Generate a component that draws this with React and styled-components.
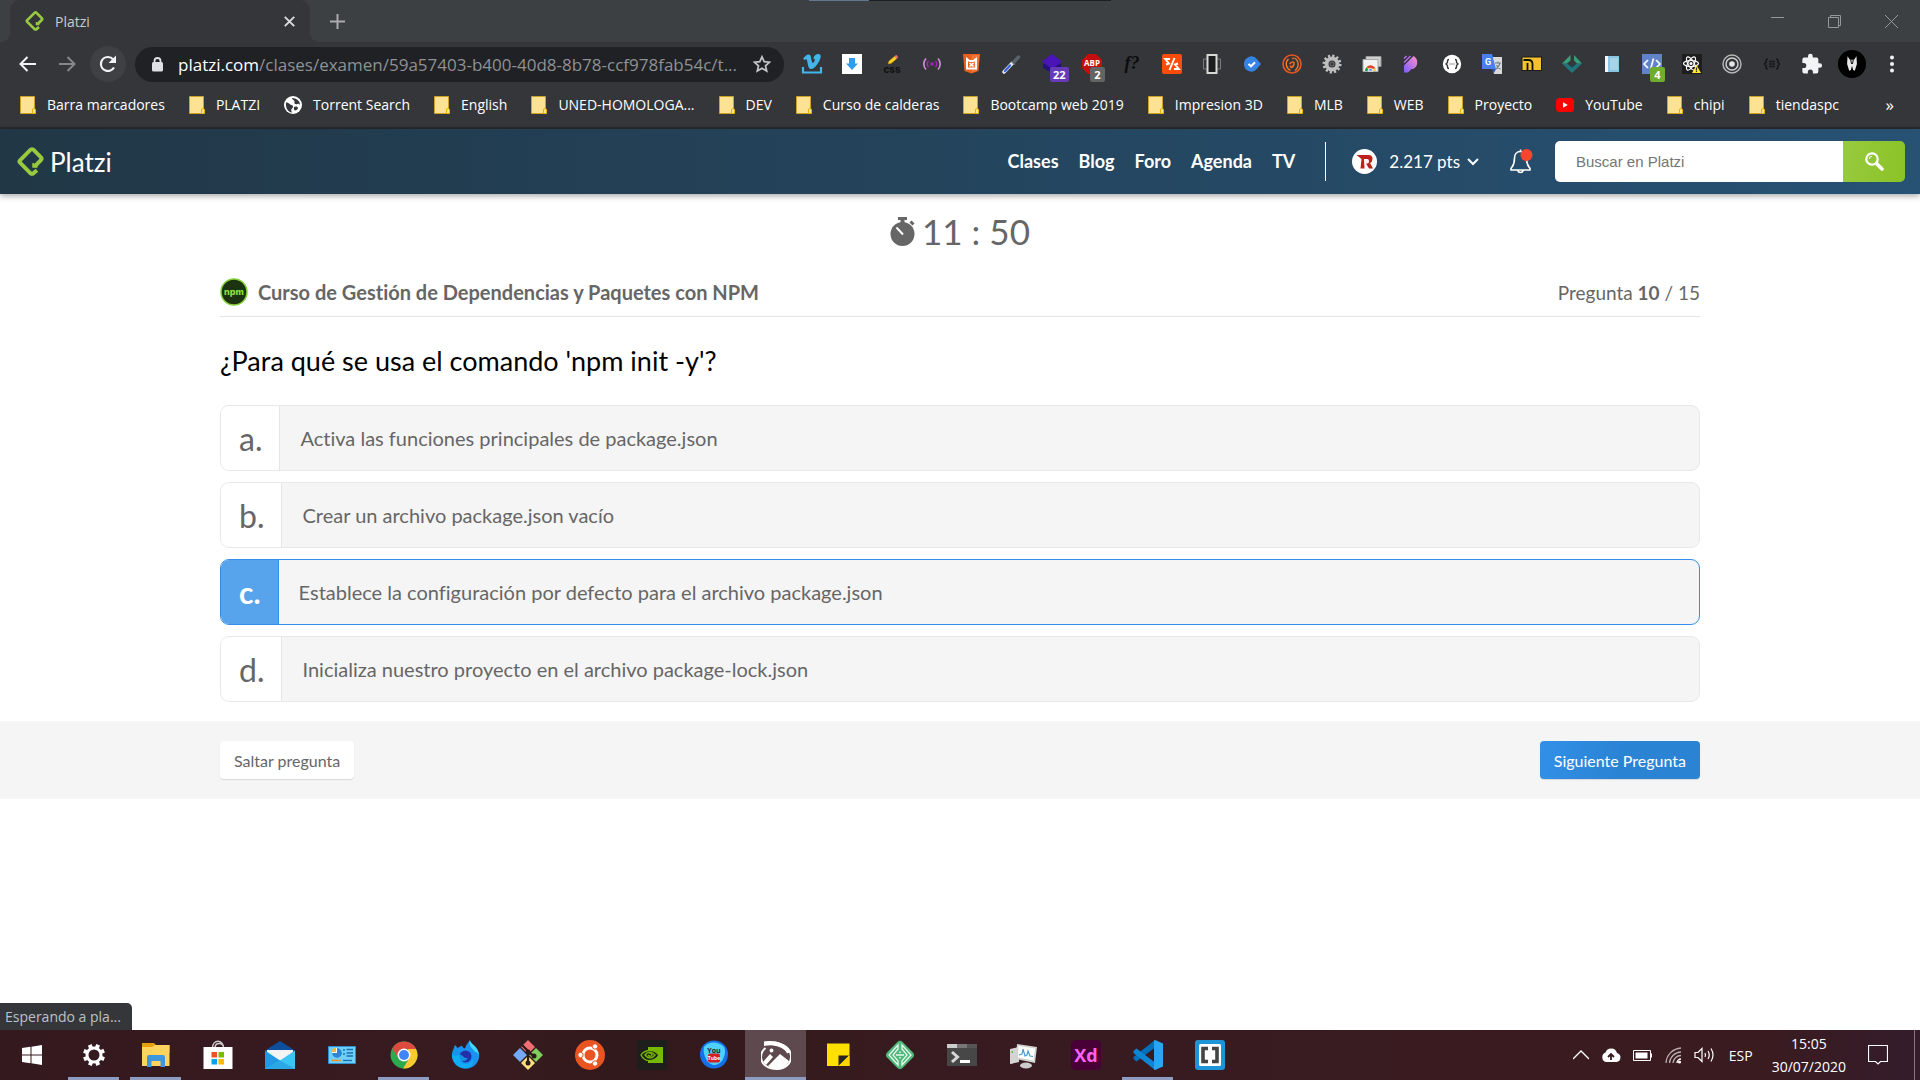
import React, { useState } from "react";
import styled, { createGlobalStyle, css } from "styled-components";

const uiFont = `"Open Sans", "Noto Sans", sans-serif`;
const siteFont = `Lato, "Open Sans", sans-serif`;

const GlobalStyle = createGlobalStyle`
  *, *::before, *::after { box-sizing: border-box; }
  body { margin: 0; background: #fff; font-family: ${siteFont}; font-variant-ligatures: none; }
  button { border: 0; padding: 0; margin: 0; background: none; font: inherit; color: inherit; cursor: pointer; }
  svg { display: block; flex: none; }
`;

const Screen = styled.div`
  min-height: 100vh;
  display: flex;
  flex-direction: column;
  overflow-x: hidden;
`;

/* ---------- Browser chrome ---------- */

const TabStrip = styled.div`
  position: relative;
  display: flex;
  align-items: stretch;
  height: 42px;
  padding-left: 10px;
  background: #3c4043;
  font-family: ${uiFont};
  &::before {
    content: "";
    position: absolute;
    top: 0;
    left: 809px;
    width: 302px;
    height: 1px;
    background: linear-gradient(90deg, #66758f 60px, #1e1f21 60px);
  }
`;

const Tab = styled.div`
  position: relative;
  display: flex;
  align-items: center;
  gap: 11px;
  width: 300px;
  padding: 0 13px 0 15px;
  background: #35363a;
  border-radius: 10px 10px 0 0;
  font-size: 14px;
  color: #c9cbcf;
  &::before,
  &::after {
    content: "";
    position: absolute;
    bottom: 0;
    width: 10px;
    height: 10px;
  }
  &::before {
    right: 100%;
    background: radial-gradient(circle at 0 0, transparent 10px, #35363a 10px);
  }
  &::after {
    left: 100%;
    background: radial-gradient(circle at 100% 0, transparent 10px, #35363a 10px);
  }
`;

const TabTitle = styled.span`
  flex: 1;
`;

const StripButton = styled.button`
  display: grid;
  place-items: center;
  width: ${(p) => p.$width}px;
  color: ${(p) => p.$color || "#dadce0"};
`;

const WindowControls = styled.div`
  display: flex;
  margin-left: auto;
`;

const Toolbar = styled.div`
  display: flex;
  align-items: center;
  height: 44px;
  padding: 0 8px 0 7px;
  background: #35363a;
`;

const ToolButton = styled.button`
  position: relative;
  display: grid;
  place-items: center;
  flex: none;
  width: 40px;
  height: 36px;
  color: ${(p) => (p.$muted ? "#85878a" : "#f1f3f4")};
`;

const Reload = styled(ToolButton)`
  width: 36px;
  margin: 0 9px 0 3px;
  border-radius: 50%;
  background: #3f4044;
`;

const Omnibox = styled.div`
  display: flex;
  align-items: center;
  flex: 1;
  height: 35px;
  min-width: 0;
  margin-right: 8px;
  padding: 0 13px 0 16px;
  border-radius: 18px;
  background: #202124;
  font-family: ${uiFont};
  font-size: 17px;
  color: #8f9194;
`;

const Address = styled.span`
  flex: 1;
  min-width: 0;
  margin-left: 14px;
  white-space: nowrap;
  b {
    font-weight: 400;
    color: #fff;
  }
`;

const Badge = styled.span`
  position: absolute;
  left: 18px;
  top: 21px;
  min-width: 15px;
  padding: 0 3px;
  border-radius: 2px;
  background: ${(p) => p.$color};
  color: #fff;
  font: 700 11px/15px ${uiFont};
`;

const BookmarkBar = styled.nav`
  display: flex;
  align-items: center;
  height: 43px;
  padding: 0 26px 4px 20px;
  background: #35363a;
  border-bottom: 2px solid #28292b;
  font-family: ${uiFont};
  font-size: 14px;
  color: #fff;
`;

const Bookmark = styled.a`
  display: flex;
  align-items: center;
  gap: 11px;
  margin-right: 24px;
  color: inherit;
  text-decoration: none;
  white-space: nowrap;
`;

const More = styled.button`
  margin-left: auto;
  font-size: 17px;
  line-height: 20px;
`;

/* ---------- Site header ---------- */

const SiteHeader = styled.header`
  position: relative;
  display: flex;
  align-items: center;
  height: 65px;
  padding: 0 15px 0 17px;
  background: linear-gradient(90deg, #213746, #275274);
  box-shadow: 0 2px 6px rgba(0, 0, 0, 0.35);
  color: #fff;
`;

const Brand = styled.a`
  display: flex;
  align-items: center;
  gap: 6px;
  margin-right: auto;
  color: #fff;
  font: 400 26px/30px ${siteFont};
  text-decoration: none;
`;

const Nav = styled.nav`
  display: flex;
  gap: 20px;
  padding-right: 30px;
  margin-right: 26px;
  border-right: 1px solid #fff;
  line-height: 39px;
  font-size: 18px;
  font-weight: 700;
  a {
    color: #fff;
    text-decoration: none;
  }
`;

const Points = styled.button`
  display: flex;
  align-items: center;
  font-size: 17px;
  svg + span {
    margin: 0 7px 0 12px;
  }
`;

const Bell = styled.button`
  margin: 0 22px 0 31px;
`;

const Search = styled.form`
  display: flex;
  width: 350px;
  height: 41px;
  border-radius: 5px;
  overflow: hidden;
  input {
    flex: 1;
    min-width: 0;
    padding: 0 21px;
    border: 0;
    background: #fff;
    font: 15px "Liberation Sans", sans-serif;
    &::placeholder {
      color: #757575;
    }
  }
  button {
    display: grid;
    place-items: center;
    width: 62px;
    background: linear-gradient(100deg, #98ca3f, #8ac326);
  }
`;

/* ---------- Exam ---------- */

const Page = styled.main`
  position: relative;
  flex: 1;
  color: #666;
`;

const Wrap = styled.div`
  max-width: 1520px;
  margin: 0 auto;
  padding: 0 20px;
`;

const Timer = styled.div`
  display: flex;
  align-items: center;
  justify-content: center;
  gap: 7px;
  height: 74px;
  font-size: 35px;
`;

const CourseRow = styled.div`
  display: flex;
  align-items: center;
  height: 49px;
  border-bottom: 1px solid #e5e5e5;
  font-size: 19px;
`;

const CourseTitle = styled.h1`
  flex: 1;
  margin: 0 0 0 10px;
  font-size: 20px;
`;

const Question = styled.legend`
  padding: 0;
  font-size: 27px;
  line-height: 88px;
  color: #000;
`;

const Options = styled.fieldset`
  margin: 0;
  padding: 0 0 19px;
  border: 0;
`;

const Letter = styled.span`
  display: flex;
  align-items: center;
  padding: 0 17px 0 18px;
  border-right: 1px solid #e5e5e5;
  background: #fff;
  font-size: 32px;
`;

const Option = styled.label`
  display: flex;
  height: 66px;
  margin-bottom: 11px;
  border: 1px solid #e8e8e8;
  border-radius: 9px;
  background: #f5f5f5;
  overflow: hidden;
  font-size: 20px;
  cursor: pointer;
  &:last-child {
    margin-bottom: 0;
  }
  input {
    position: absolute;
    opacity: 0;
  }
  ${(p) =>
    p.$selected &&
    css`
      border-color: #3190e7;
      ${Letter} {
        background: #58a4ec;
        border-color: #3190e7;
        color: #fff;
        font-weight: 700;
        font-size: 30px;
      }
    `}
`;

const OptionText = styled.span`
  align-self: center;
  padding: 0 20px;
`;

const Actions = styled.footer`
  background: #f5f5f5;
  padding: 20px 0;
`;

const ActionRow = styled(Wrap)`
  display: flex;
  justify-content: space-between;
`;

const Action = styled.button`
  height: 38px;
  padding: 2px 14px 0;
  border-radius: 4px;
  font-size: 16px;
  line-height: 36px;
  color: ${(p) => (p.$primary ? "#fff" : "#666")};
  background: ${(p) => (p.$primary ? "linear-gradient(100deg, #3190e7, #2b83d4 50%)" : "#fff")};
  box-shadow: 0 1px 1px rgba(0, 0, 0, 0.12);
`;

const Status = styled.div`
  position: absolute;
  left: 0;
  bottom: 0;
  width: 132px;
  padding-left: 5px;
  border-top-right-radius: 5px;
  background: #35363a;
  color: #bdc1c6;
  font: 14px/27px ${uiFont};
`;

/* ---------- Taskbar ---------- */

const Taskbar = styled.div`
  display: flex;
  align-items: stretch;
  height: 50px;
  padding-left: 1px;
  background: linear-gradient(90deg, #34191f, #371b20 25%, #32191b 32%, #371b20 50%, #3a1b20 92%, #341c2b);
  color: #fff;
  font-family: ${uiFont};
`;

const Task = styled.button`
  display: grid;
  place-items: center;
  width: 62px;
  border-right: 1px solid transparent;
  ${(p) =>
    p.$open &&
    css`
      background: linear-gradient(#8e9cc0, #8e9cc0) center bottom / 51px 3px no-repeat;
    `}
  ${(p) =>
    p.$active &&
    css`
      background: linear-gradient(#8e9cc0, #8e9cc0) center bottom / 61px 3px no-repeat padding-box, #5e4a4e padding-box;
    `}
`;

const Tray = styled.div`
  display: flex;
  align-items: center;
  gap: 12px;
  margin-left: auto;
  margin-right: 5px;
  padding-right: 26px;
  border-right: 1px solid #86777f;
  font-size: 14px;
`;

const Language = styled.span`
  margin-left: 1px;
`;

const Clock = styled.time`
  margin: 0 10px 0 7px;
  line-height: 23px;
  text-align: center;
`;

/* ---------- Drawings ---------- */

const Svg = ({ s = 20, w, h, box = "0 0 20 20", children, ...rest }) => (
  <svg width={w || s} height={h || s} viewBox={box} fill="none" aria-hidden="true" {...rest}>
    {children}
  </svg>
);

const PlatziMark = ({ w, h }) => (
  <Svg w={w} h={h} box="0 0 27 29">
    <path
      d="M20 23.200L16.400 26.300Q15 27.300 13.600 26.300L3 15.700Q1.900 14.500 3 13.300L13.600 2.700Q15 1.600 16.400 2.700L24 10.300Q25.200 11.700 24 13L17.700 19.300"
      stroke="#98ca3f"
      strokeWidth="3.900"
      strokeLinejoin="round"
    />
    <path d="M16.300 16v3.800h4.200" stroke="#98ca3f" strokeWidth="2" />
  </Svg>
);

const Folder = () => (
  <Svg w={16} h={18} box="0 0 16 18">
    <path d="M.5.5h14v17H.5z" fill="#fde293" stroke="#c9a227" />
    <path d="M12.500 17.500v-3.500q0-1.500 1.500-1.500t1.500 1.500v3.500z" fill="#ffe68a" stroke="#e0b400" />
  </Svg>
);

const Globe = () => (
  <Svg w={18} h={18} box="0 0 18 18">
    <circle cx="9" cy="9" r="9" fill="#fff" />
    <path d="M2 6.500c3 0 3.500 2 5.500 2.500s2 2.500.5 3.500-.5 3 0 4c-4-.5-6.500-4-6-10zM8 2c0 2 3 2 2.500 4s1 2.500 3 2 2 .5 2.500 1.500c.3-4-2.500-7-8-7.500zM10 11c1.500-1 4-.5 4 1s-2 2.500-3 2.500-1.500-2.500-1-3.500z" fill="#35363a" />
  </Svg>
);

const YouTube = () => (
  <Svg w={18} h={14} box="0 0 18 14">
    <rect width="18" height="14" rx="3.500" fill="#f00" />
    <path d="M7 4.200v5.600L11.800 7z" fill="#fff" />
  </Svg>
);

const extensionIcons = [
  { name: "Vimeo", art: <><path d="M1 13v5.500h18V13" stroke="#41b6e8" strokeWidth="2.200" /><path d="M1.200 4.500C3 2.500 4.500.5 6.500.5c2.500 0 2.500 3 3 5.500.4 2 .8 3 1.300 3 .7 0 2-2.200 2-3.300 0-1-.8-1-1.600-.8C12 1.500 14 0 16.500.1c3 .2 2.600 3.500 1 6.400-2 3.700-5 8.500-8.500 8.500C6 15 6 10 5 6.500c-.3-1.200-.8-1.800-2.800-.6z" fill="#41b6e8" /></> },
  { name: "Descargas", art: <><path d="M0 0h20v20H0z" fill="#fff" /><path d="M7 4h6v5.500h3L10 16 4 9.500h3z" fill="#2e9cf0" /></> },
  { name: "Editor CSS", art: <><path d="M6 10l1-3 6-5 2 2.500-6 5z" fill="#ffd21f" stroke="#b8860b" strokeWidth=".5" /><path d="M12.500 2.300L14.300.8l2 2.500-1.800 1.500z" fill="#ef6b7b" /><text x="10" y="18.500" textAnchor="middle" fontSize="10" fontWeight="700" fontFamily="Inter, sans-serif" fill="#111">css</text></> },
  { name: "Señal", art: <><circle cx="10" cy="10" r="1.800" fill="#9c27b0" /><path d="M6.500 7a4.500 4.500 0 000 6M13.500 7a4.500 4.500 0 010 6" stroke="#9c27b0" strokeWidth="1.600" /><path d="M4 4.500a8 8 0 000 11M16 4.500a8 8 0 010 11" stroke="#ce93d8" strokeWidth="1.600" /></> },
  { name: "Plantillas", art: <><path d="M1 0h17l-1.500 17L9.500 19.500 2.500 17z" fill="#e8601c" /><path d="M9.500 1v17.500l6-2L17 1z" fill="#f0753a" /><path d="M5 5l2.500 2h4L14 5v9.500H5z" stroke="#fff" strokeWidth="2" /><path d="M7.500 9l4 3.500M11.500 9l-4 3.500" stroke="#fff" strokeWidth="1.600" /></> },
  { name: "Cuentagotas", art: <><path d="M2 18L10 9.500" stroke="#e8eef8" strokeWidth="3.500" strokeLinecap="round" /><path d="M3 17L8 11.500" stroke="#3b64d8" strokeWidth="2.400" strokeLinecap="round" /><path d="M9.500 7.500l3 3" stroke="#999" strokeWidth="1.600" /><path d="M12 8L16.500 3" stroke="#5a626d" strokeWidth="3.400" strokeLinecap="round" /></> },
  { name: "Capas", badge: ["22", "#673ab7"], art: <><path d="M1 10l9-4 9 4v4l-9 5-9-5z" fill="#24127a" /><path d="M0 7.500L10 0l10 7.500L10 15z" fill="#4a14b8" /></> },
  { name: "ABP", badge: ["2", "#646464"], art: <><path d="M6 0h8l6 6v8l-6 6H6l-6-6V6z" fill="#c70d0c" /><text x="10" y="12" textAnchor="middle" fontSize="8" fontWeight="700" fontFamily="Open Sans, sans-serif" fill="#fff">ABP</text></> },
  { name: "Fuentes", art: <text x="10" y="15" textAnchor="middle" fontSize="18" fontStyle="italic" fontWeight="700" fontFamily="Liberation Serif, serif" fill="#0c0c0c">f?</text> },
  { name: "Código", art: <><rect width="20" height="20" rx="2" fill="#fb4d0a" /><path d="M8 5H3.200L7 9.500 4 10.500M12 15h4.800L13 10.500l3-1M12.500 4L7.500 16" stroke="#fff" strokeWidth="1.900" /></> },
  { name: "Redimensionar", art: <><path d="M1.500 5v10H18.500V5z" stroke="#77797c" /><path d="M5.500 1h9v18h-9z" fill="#1b1c1e" stroke="#d8d8d4" strokeWidth="2" /></> },
  { name: "Verificar", art: <><path d="M2 10a7.300 7.300 0 0113-4.800L19 10l-4 4.800A7.300 7.300 0 012 10z" fill="#3584e4" /><path d="M6.500 10l2.500 2.300 4-4" stroke="#fff" strokeWidth="2" /></> },
  { name: "Información", art: <><circle cx="10" cy="10" r="9" stroke="#e65420" strokeWidth="1.700" /><path d="M6.500 5C3 8 3.500 14 8.500 16.500M13 16.500c4.500-3.500 4-10-.5-12.500" stroke="#f0802b" strokeWidth="1.300" /><path d="M11 3.500v1.800M7.500 10c2-2.500 5-3 4.500 0s-4 5-3.500 1.500" stroke="#ef6a25" strokeWidth="1.600" /></> },
  { name: "Ajustes", art: <><circle cx="10" cy="10" r="8" stroke="#c4c4c4" strokeWidth="3" strokeDasharray="2.100 2.088" /><circle cx="10" cy="10" r="5.500" stroke="#bdbdbd" strokeWidth="4" /><circle cx="10" cy="10" r="2" fill="#333" stroke="#777" /></> },
  { name: "Chrome", art: <><path d="M4 2.500h15v10H4z" fill="#d0d0d0" stroke="#999" /><path d="M1 5.500h15v12H1z" fill="#f2f2f2" stroke="#aaa" /><path d="M3 17a5.500 5.500 0 0111 0z" fill="#ffcd40" /><path d="M3 17a5.500 5.500 0 011.500-3.800L7.500 17z" fill="#0f9d58" /><path d="M4.300 13.300A5.500 5.500 0 0113.500 14.500H8z" fill="#db4437" /><path d="M6 17a2.500 2.500 0 015 0z" fill="#4285f4" stroke="#fff" strokeWidth=".8" /></> },
  { name: "Parallel", art: <><defs><linearGradient id="pp" x1="1" y1="0" x2="0" y2="1"><stop stopColor="#ff8fc8" /><stop offset="1" stopColor="#7a5cff" /></linearGradient></defs><path d="M2 18.500V11.500L11.500 2a7.300 7.300 0 01-.5 13H9.500L6 18.500z" fill="url(#pp)" /><path d="M2 4.500L4.500 2M2 8.500L8.500 2" stroke="#a86be8" strokeWidth="1.600" /></> },
  { name: "JSON", art: <><circle cx="10" cy="10" r="9.200" fill="#fff" /><path d="M7 5.500q-1.500 0-1.500 1.500v1.500L4 10l1.500 1.500V13q0 1.500 1.500 1.500M13 5.500q1.500 0 1.500 1.500v1.500L16 10l-1.500 1.500V13q0 1.500-1.500 1.500" stroke="#333" strokeWidth="1.400" /><path d="M7.500 10h5" stroke="#333" strokeDasharray="1 1" /></> },
  { name: "Traductor", art: <><path d="M8 3h12v17h-8z" fill="#dadada" /><path d="M0 0h10l4 15H0z" fill="#4a80ec" /><path d="M10 15h4l-2 4z" fill="#2753b8" /><text x="6" y="11" textAnchor="middle" fontSize="9" fontWeight="700" fontFamily="Roboto, sans-serif" fill="#fff">G</text><path d="M13 9h6M16 7.500V9M18 9q-1 4-4 6M14.500 11q1 2.500 4 4" stroke="#6b7d8b" strokeWidth="1.100" /></> },
  { name: "Rutas", art: <><path d="M0 3h19.500v13.500H0z" fill="#f2c12e" stroke="#1a1a1a" /><path d="M1.500 6h5q4 0 4 4v6M5.500 9v7" stroke="#111" strokeWidth="1.800" /></> },
  { name: "Rombo", art: <><path d="M0 9.500L10 19l10-9.500h-5L10 13 5 9.500z" fill="#22747c" /><path d="M0 9.500L8.500 1v5.500L5 9.500zM20 9.500L12 1v5.500l3 3z" fill="#35a07a" /><path d="M5 9.500l5 4.500 5-4.500L10 12.500z" fill="#144e57" /></> },
  { name: "Cuaderno", art: <><path d="M3 2h14v16H3z" fill="#8cc4e2" /><path d="M3 2h3v16H3z" fill="#f3f5f6" /><path d="M8 4h8v12H8z" fill="#a7d3e9" /></> },
  { name: "Inspector", badge: ["4", "#6fad2c"], art: <><path d="M0 0h20v20H0z" fill="#6184c8" /><path d="M6 6l-4 4 4 4M14 6l4 4-4 4M11.500 4.500l-3 11" stroke="#fff" strokeWidth="1.700" /></> },
  { name: "React", art: <><rect width="20" height="20" rx="1" fill="#1d1d1d" /><g stroke="#fff" strokeWidth="1.200"><ellipse cx="9" cy="9.500" rx="7.500" ry="3" /><ellipse cx="9" cy="9.500" rx="7.500" ry="3" transform="rotate(60 9 9.500)" /><ellipse cx="9" cy="9.500" rx="7.500" ry="3" transform="rotate(120 9 9.500)" /></g><circle cx="9" cy="9.500" r="1.500" fill="#fff" /><path d="M14.500 11l4.500 8h-9z" fill="#ffe62e" /><path d="M14.500 13.500v3M14.500 17v1" stroke="#333" strokeWidth="1.200" /></> },
  { name: "Círculos", art: <><circle cx="10" cy="10" r="9" stroke="#b9b9b9" strokeWidth="1.400" /><circle cx="10" cy="10" r="6" stroke="#cfcfcf" strokeWidth="1.500" /><circle cx="10" cy="10" r="2.800" fill="#e6e6e6" /></> },
  { name: "Formato JSON", art: <><path d="M6 5q-2 0-2 2v1.500L2.500 10 4 11.500V13q0 2 2 2M14 5q2 0 2 2v1.500l1.500 1.500-1.500 1.500V13q0 2-2 2" stroke="#17181a" strokeWidth="1.600" /><path d="M7 7.500h6M7 10h6M7 12.500h6" stroke="#17181a" strokeWidth="1.400" /></> },
  { name: "Extensiones", art: <path transform="translate(-1.500 -1.200) scale(.94)" d="M20.500 11H19V7a2 2 0 00-2-2h-4V3.500a2.500 2.500 0 00-5 0V5H4a2 2 0 00-2 2v3.800h1.500a2.700 2.700 0 010 5.400H2V20a2 2 0 002 2h3.800v-1.500a2.700 2.700 0 015.400 0V22H17a2 2 0 002-2v-4h1.500a2.500 2.500 0 000-5z" fill="#f1f3f4" /> },
  { name: "Perfil", size: 28, art: <><circle cx="10" cy="10" r="10" fill="#000" /><path d="M6.800 4.500L8.500 7h3l1.700-2.500.3 5.500-1.500 4.800-1.200-.5-.8-3-.8 3-1.200.5L6.500 10z" fill="#e8e8e8" /><path d="M9 6.500l.7 3.500M11 6.500L10.300 10" stroke="#222" strokeWidth=".8" /></> },
  { name: "Menú", art: <g fill="#f1f3f4"><circle cx="10" cy="3.500" r="2" /><circle cx="10" cy="10" r="2" /><circle cx="10" cy="16.500" r="2" /></g> },
];

const bookmarks = [
  ["Barra marcadores"],
  ["PLATZI"],
  ["Torrent Search", Globe],
  ["English"],
  ["UNED-HOMOLOGA..."],
  ["DEV"],
  ["Curso de calderas"],
  ["Bootcamp web 2019"],
  ["Impresion 3D"],
  ["MLB"],
  ["WEB"],
  ["Proyecto"],
  ["YouTube", YouTube],
  ["chipi"],
  ["tiendaspc"],
];

const gearTeeth = [0, 45, 90, 135, 180, 225, 270, 315];

const tasks = [
  { name: "Inicio", art: <path transform="translate(5 5)" d="M0 3l8.500-1.200V9.500H0zM9.500 1.700L20 0v9.500H9.500zM0 10.500h8.500v7.700L0 17zM9.500 10.500H20V20L9.500 18.300z" fill="#fff" /> },
  { name: "Configuración", open: true, art: <g stroke="#fff"><circle cx="15" cy="15" r="7" strokeWidth="3" />{gearTeeth.map((a) => <path key={a} d="M15 8V4" strokeWidth="4" transform={`rotate(${a + 22} 15 15)`} />)}</g> },
  { name: "Explorador", open: true, art: <><path d="M1 3h12l2 2h13.500v8H1z" fill="#e5a00d" /><path d="M1 7h10l3-2h14.500v21H1z" fill="#ffd45e" /><path d="M6 27V17q0-2 2-2h14q2 0 2 2v10h-4.500v-6h-9v6z" fill="#3d97dc" /></> },
  { name: "Microsoft Store", art: <><path d="M9.500 8c0-9 11-9 11 0M12 8c0-6 8.500-6 8.500 0" stroke="#ccc" strokeWidth="1.500" /><path d="M.5 7h29v22H.5z" fill="#fff" /><path d="M8.500 12H14v5.500H8.500z" fill="#f25022" /><path d="M15.500 12H21v5.500h-5.500z" fill="#7fba00" /><path d="M8.500 19H14v5.500H8.500z" fill="#00a4ef" /><path d="M15.500 19H21v5.500h-5.500z" fill="#ffb900" /></> },
  { name: "Correo", art: <><path d="M0 10.500L15 1l15 9.500v6H0z" fill="#0d4f9c" /><path d="M2 10h26v6L15 21 2 16z" fill="#f4f4f4" /><path d="M0 10.500l15 10L30 29H0z" fill="#1f9be0" /><path d="M30 10.500l-15 10L0 29h30z" fill="#3cc4f4" /><path d="M15 20.500L30 29H0z" fill="#2aa8e6" /></> },
  { name: "Panel de control", art: <><path d="M1.500 6.500h27v17h-27z" fill="#6fd0fb" stroke="#2d8fd0" /><circle cx="10" cy="13" r="5" fill="#fff" /><path d="M10 13V8a5 5 0 11-5 5z" fill="#2b87d1" /><path d="M9 12V8a4 4 0 00-4 4z" fill="#ffb52e" /><path d="M16 10h2M16 14h2M19.500 9.500H26M19.500 13H26M19.500 16H26" stroke="#1b6fae" strokeWidth="1.600" /><path d="M5 20.500h9" stroke="#f0932b" strokeWidth="1.600" /><path d="M16 20.500h9" stroke="#1b6fae" strokeWidth="1.400" /></> },
  { name: "Chrome", open: true, art: <><circle cx="15" cy="15" r="13.500" fill="#2da94f" /><path d="M3.200 8.500L9.500 18 15 9h12A13.500 13.500 0 003.200 8.500z" fill="#dd4b3e" /><path d="M27 9a13.500 13.500 0 01-13 19.500L20.500 18 19 9z" fill="#fdc92f" /><circle cx="15" cy="15" r="6.500" fill="#fff" /><circle cx="15" cy="15" r="5" fill="#4285f4" /></> },
  { name: "Firefox", art: <><path d="M2 10c1-2 1-3 2-5 1 1 2 2 2.500 3 1.500-.8 3-1.500 4.500-2.500.5 1.500 1 2.500 3 3 1-3.500 3-6 5-8.500 0 3 2 4 5 7s6 8 3 14-8 7.500-12 7.500S2 26 1 17c-.2-3 .2-5 1-7z" fill="#1893f0" /><path d="M19 0c0 4 9 6 9 16-1-3-2-4-4-4-2-4-7-5-5-12z" fill="#42d7f8" /><circle cx="14.500" cy="16.500" r="6" fill="#2430a8" /><path d="M1 14c3 4 6 0 9 1s3 4 7 3c-2 4-7 4-9 2 3 6 12 5 14-1 1 6-4 9.500-8 9.500C7 28.500 1 23 1 14z" fill="#0eb4f5" opacity=".75" /></> },
  { name: "Git Bash", art: <><path d="M15 0l7 7-7 7-7-7z" fill="#ef6f74" /><path d="M7 8l7 7-7 7-7-7z" fill="#74a9f8" /><path d="M23 8l7 7-7 7-7-7z" fill="#80cc5c" /><path d="M15 16l7 7-7 7-7-7z" fill="#fbe07c" /><path d="M9 5l6 6v13M15 12l6 4" stroke="#2b1a1a" strokeWidth="2.200" /><circle cx="15" cy="12" r="2.500" fill="#2b1a1a" /><circle cx="15" cy="23" r="2.500" fill="#2b1a1a" /><circle cx="21" cy="16" r="2.500" fill="#2b1a1a" /></> },
  { name: "Ubuntu", art: <><circle cx="15" cy="15" r="15" fill="#e95420" /><circle cx="15" cy="15" r="7" stroke="#fff" strokeWidth="3" /><g fill="#fff" stroke="#e95420" strokeWidth="1"><circle cx="5.500" cy="15" r="2.700" /><circle cx="20" cy="6.500" r="2.700" /><circle cx="20" cy="23.500" r="2.700" /></g></> },
  { name: "NVIDIA", art: <><path d="M0 0h30v30H0z" fill="#1e1e1c" /><path d="M11 7h15v16H11z" fill="#76b900" /><path d="M11 11c6-2 9 1 11 4-2 3-6 6-11 5.500z" fill="#1e1e1c" /><path d="M4 15c3-5 13-7 18 0-4 7-14 8-18 0zM8 15c2-3 7-4 10 0-3 4-7 4-10 0zM12 13c2-.5 3 1 3 2-1 2-3 1.500-4 0" stroke="#76b900" strokeWidth="1.400" /></> },
  { name: "YouTube", art: <><circle cx="15" cy="14.500" r="14" fill="#1470e8" /><path d="M5 7c4-6 15-6 20 0 2 4 1 9-2 14-6 7-13 4-16-2-2-4-3-8-2-12z" fill="#4fd0fb" /><rect x="9" y="13.500" width="12" height="9" rx="2" fill="#d42020" /><text x="15" y="12.500" textAnchor="middle" fontSize="7" fontWeight="700" fontFamily="Open Sans, sans-serif" fill="#222">You</text><text x="15" y="20" textAnchor="middle" fontSize="5" fontWeight="700" fontFamily="Open Sans, sans-serif" fill="#fff">Tube</text></> },
  { name: "Paisaje", active: true, art: <><path d="M3 2.500c10-2 26 2 27 13 .5 8-6 13.500-14 13.500S0 25 0 17c0-4 2-7 4.500-9M3 4c9-1 21 2 24 9" stroke="#fff" strokeWidth="2" /><path d="M3 2c9-2 22 0 26 10l-2 1C23 6 12 4 3 6z" fill="#fff" /><path d="M7 26l12-12 9 7c-2 5-7 8-12 8-4 0-7-1-9-3zM2 22l7-8 3 3-7 8z" fill="#fff" /><circle cx="10.500" cy="10.500" r="1.900" fill="#fff" /></> },
  { name: "Notas", art: <><path d="M4 3.500h22.500V26H4z" fill="#ffe000" /><path d="M15.500 15.500h10.500L15.500 26z" fill="#2a2422" /><path d="M26.500 15.500V26h-11z" fill="#ffd500" /></> },
  { name: "Diamante", art: <><rect x="4" y="4" width="22" height="22" rx="4" transform="rotate(45 15 15)" fill="#4fb87a" /><path d="M13 5L4 15l9 10v-4l-5-6 5-6zM17 5l9 10-9 10v-4l5-6-5-6z" stroke="#e6f7ec" strokeWidth="1.300" /><path d="M11 15h8M15 11.500v1.500M15 17v1.500" stroke="#e6f7ec" strokeWidth="1.500" /></> },
  { name: "Terminal", art: <><path d="M0 4h30v22H0z" fill="#474747" /><path d="M0 4h30v4H0z" fill="#777" /><path d="M0 4h10v4H0z" fill="#ccc" /><path d="M20 4h10v4H20z" fill="#555" /><path d="M5 12l5.500 5L5 22" stroke="#d8d8d8" strokeWidth="3" /><path d="M13 21.500h10" stroke="#fff" strokeWidth="3" /></> },
  { name: "Monitor", art: <><path d="M2 10l7-3v14l-7 3z" fill="#b8b8b8" /><path d="M1 9l9-2v15l-9 2z" fill="#d4d4d4" /><path d="M2.500 11h1.500v2H2.500z" fill="#5cc33d" /><path d="M8 4l20 3-2 16-19-4z" fill="#d2d2cf" /><path d="M9.500 6L26 8.500l-1.500 12L9 17.500z" fill="#fff" /><path d="M10 15l3-1 1-5 2 7 2-1 1-4 2 5 3 .5" stroke="#4b9ad0" strokeWidth="1.200" /><ellipse cx="17" cy="25.500" rx="6" ry="3" fill="#ccc" /></> },
  { name: "Adobe XD", art: <><rect width="30" height="30" rx="5" fill="#470137" /><text x="15" y="21.500" textAnchor="middle" fontSize="18" fontWeight="700" fontFamily="Open Sans, sans-serif" fill="#ff61f6">Xd</text></> },
  { name: "Visual Studio Code", open: true, art: <><path d="M22 7.500L3.500 21.500.5 19v-2L22 0z" fill="#0070ba" /><path d="M22 22.500L3.500 8.500.5 11v2L22 30z" fill="#0e86d3" /><path d="M22 0l8 3.500v23L22 30q-1.500 0-1-2V2q-.5-2 1-2z" fill="#2aa5f2" /></> },
  { name: "Brackets", art: <><rect width="30" height="30" rx="3" fill="#1e94d8" /><rect x="4" y="4" width="22" height="22" rx="1.500" fill="#fff" /><path d="M13 8.500H8v13h5M17 8.500h5v13h-5" stroke="#444" strokeWidth="3.600" /></> },
];

const answers = [
  ["a", "Activa las funciones principales de package.json"],
  ["b", "Crear un archivo package.json vacío"],
  ["c", "Establece la configuración por defecto para el archivo package.json"],
  ["d", "Inicializa nuestro proyecto en el archivo package-lock.json"],
];

export default function App() {
  const [choice, setChoice] = useState("c");
  return (
    <Screen>
      <GlobalStyle />
      <TabStrip>
        <Tab>
          <PlatziMark w={19} h={20} />
          <TabTitle>Platzi</TabTitle>
          <StripButton $width={16} aria-label="Cerrar pestaña">
            <Svg s={11} box="0 0 11 11"><path d="M.8.8l9.400 9.400M10.200.8L.8 10.200" stroke="currentColor" strokeWidth="1.900" /></Svg>
          </StripButton>
        </Tab>
        <StripButton $width={54} $color="#a9abae" aria-label="Nueva pestaña">
          <Svg s={15} box="0 0 15 15"><path d="M7.500 0v15M0 7.500h15" stroke="currentColor" strokeWidth="2" /></Svg>
        </StripButton>
        <WindowControls>
          <StripButton $width={57} $color="#95989a" aria-label="Minimizar">
            <Svg s={13} box="0 0 13 13"><path d="M0 2.500h13" stroke="currentColor" /></Svg>
          </StripButton>
          <StripButton $width={57} $color="#95989a" aria-label="Restaurar">
            <Svg s={13} box="0 0 13 13"><path d="M.5 2.500h10v10H.5zM2.500 2.500v-2h10v10h-2" stroke="currentColor" /></Svg>
          </StripButton>
          <StripButton $width={57} $color="#95989a" aria-label="Cerrar">
            <Svg s={13} box="0 0 13 13"><path d="M0 0l13 13M13 0L0 13" stroke="currentColor" /></Svg>
          </StripButton>
        </WindowControls>
      </TabStrip>

      <Toolbar>
        <ToolButton aria-label="Atrás">
          <Svg w={17} h={16} box="0 0 17 16"><path d="M17 8H1.500M8.500 1L1.500 8l7 7" stroke="currentColor" strokeWidth="2" /></Svg>
        </ToolButton>
        <ToolButton $muted aria-label="Adelante">
          <Svg w={17} h={16} box="0 0 17 16"><path d="M0 8h15.500M8.500 1l7 7-7 7" stroke="currentColor" strokeWidth="2" /></Svg>
        </ToolButton>
        <Reload aria-label="Recargar">
          <Svg w={18} h={18} box="0 0 18 18"><path d="M15 12.500A7 7 0 119 2c2.500 0 4 1 5.500 2.700" stroke="currentColor" strokeWidth="2.200" /><path d="M17 .5V8H9.500z" fill="currentColor" /></Svg>
        </Reload>
        <Omnibox>
          <Svg w={13} h={15} box="0 0 13 15"><rect x="1" y="5" width="11" height="9.500" rx="1.500" fill="#dfe1e5" /><path d="M3.500 6V4a3 3 0 016 0v2" stroke="#dfe1e5" strokeWidth="1.800" /></Svg>
          <Address><b>platzi.com</b>/clases/examen/59a57403-b400-40d8-8b78-ccf978fab54c/t...</Address>
          <Svg w={18} h={18} box="0 0 18 18"><path d="M9 1.800l2.200 4.900 5.300.5-4 3.600 1.200 5.300L9 13.300l-4.700 2.800 1.200-5.300-4-3.600 5.300-.5z" stroke="#c4c7ca" strokeWidth="1.700" /></Svg>
        </Omnibox>
        {extensionIcons.map((x) => (
          <ToolButton key={x.name} aria-label={x.name}>
            <Svg s={x.size || 20} overflow="visible">{x.art}</Svg>
            {x.badge && <Badge $color={x.badge[1]}>{x.badge[0]}</Badge>}
          </ToolButton>
        ))}
      </Toolbar>

      <BookmarkBar>
        {bookmarks.map(([name, Icon = Folder]) => (
          <Bookmark key={name} href="#"><Icon />{name}</Bookmark>
        ))}
        <More aria-label="Más marcadores">»</More>
      </BookmarkBar>

      <SiteHeader>
        <Brand href="#"><PlatziMark w={27} h={29} />Platzi</Brand>
        <Nav>
          {["Clases", "Blog", "Foro", "Agenda", "TV"].map((n) => <a key={n} href="#">{n}</a>)}
        </Nav>
        <Points>
          <Svg w={25} h={25} box="0 0 25 25"><circle cx="12.500" cy="12.500" r="12.500" fill="#fff" /><path d="M4.500 6h12q4 0 4 4 0 3-2.500 4l3 5.500h-4l-3-5h1.500q1.500 0 1.500-2.200 0-2.300-1.800-2.300H12L12.500 19.500H8.500L9.500 10z" fill="#c0201c" /></Svg>
          <span>2.217 pts</span>
          <Svg w={12} h={8} box="0 0 12 8"><path d="M1 1l5 5 5-5" stroke="#fff" strokeWidth="2" /></Svg>
        </Points>
        <Bell aria-label="Notificaciones">
          <Svg w={23} h={27} box="0 0 23 27"><path d="M10.500 3.500c-4 0-6 3-6 6.500 0 7-1.500 7.500-3.500 10.500v1.500h19v-1.500c-2-3-3.500-3.500-3.500-10.500 0-3.500-2-6.500-6-6.500zM7.800 22.500a2.800 2.800 0 005.400 0M10.500 1.500v2" stroke="#fff" strokeWidth="1.600" /><circle cx="16.500" cy="7" r="6" fill="#f8452f" /></Svg>
        </Bell>
        <Search onSubmit={(e) => e.preventDefault()}>
          <input type="text" aria-label="Buscar en Platzi" placeholder="Buscar en Platzi" />
          <button aria-label="Buscar">
            <Svg s={19} box="0 0 19 19"><circle cx="7" cy="7" r="5.700" stroke="#fff" strokeWidth="2.200" /><path d="M11.500 11.500l5.500 5.500" stroke="#fff" strokeWidth="3.600" strokeLinecap="round" /><path d="M4.300 7A2.700 2.700 0 017 4.300" stroke="#fff" /></Svg>
          </button>
        </Search>
      </SiteHeader>

      <Page>
        <Wrap>
          <Timer>
            <Svg w={25} h={29} box="0 0 25 29"><circle cx="12.500" cy="17" r="12" fill="#666" /><path d="M8 0h9v3H14.500v3h-4V3H8z" fill="#666" /><path d="M20.500 4.500l3 3" stroke="#666" strokeWidth="3" /><path d="M13 17.500L6.500 10.500" stroke="#fff" strokeWidth="2" /></Svg>
            <span>11 : 50</span>
          </Timer>
          <CourseRow>
            <Svg s={28} box="0 0 28 28"><circle cx="14" cy="14" r="13" fill="#1c3210" stroke="#84d138" strokeWidth="1.500" /><text x="14" y="17" textAnchor="middle" fontSize="9" fontWeight="800" fontFamily="Inter, sans-serif" fill="#8ee03c">npm</text></Svg>
            <CourseTitle>Curso de Gestión de Dependencias y Paquetes con NPM</CourseTitle>
            <span>Pregunta <b>10</b> / 15</span>
          </CourseRow>
          <Options>
            <Question>¿Para qué se usa el comando 'npm init -y'?</Question>
            {answers.map(([id, text]) => (
              <Option key={id} $selected={choice === id}>
                <input type="radio" name="answer" checked={choice === id} onChange={() => setChoice(id)} />
                <Letter>{id}.</Letter>
                <OptionText>{text}</OptionText>
              </Option>
            ))}
          </Options>
        </Wrap>
        <Actions>
          <ActionRow>
            <Action>Saltar pregunta</Action>
            <Action $primary>Siguiente Pregunta</Action>
          </ActionRow>
        </Actions>
        <Status>Esperando a pla...</Status>
      </Page>

      <Taskbar>
        {tasks.map((t) => (
          <Task key={t.name} $open={t.open} $active={t.active} aria-label={t.name}>
            <Svg s={30} box="0 0 30 30">{t.art}</Svg>
          </Task>
        ))}
        <Tray>
          <Svg w={16} h={20} box="0 0 16 20"><path d="M0 14l8-8 8 8" stroke="#fff" strokeWidth="1.300" /></Svg>
          <Svg w={20} h={20}><path d="M5 17a5 5 0 01-.5-9.500A6 6 0 0116 8a4.600 4.600 0 01-.5 9z" fill="#fff" /><path d="M10 15V9.500M7 12l3-3 3 3" stroke="#3a1b20" strokeWidth="1.800" /></Svg>
          <Svg w={20} h={20}><path d="M.5 5.500h17v10H.5z" stroke="#fff" /><path d="M2.500 7.500h12v6h-12z" fill="#fff" /><path d="M18.500 8.500v4" stroke="#fff" /></Svg>
          <Svg w={17} h={20} box="0 0 17 20"><path d="M1 18A16 16 0 0116 3M4.500 18A12 12 0 0116 7M8 18a8 8 0 018-7.500" stroke="#bbaeb0" strokeWidth="1.300" /><path d="M12 18a4 4 0 014-4" stroke="#fff" strokeWidth="1.400" /><circle cx="14.500" cy="17" r="1.600" fill="#fff" /></Svg>
          <Svg w={22} h={20} box="0 0 22 20"><path d="M1 7.500h3l4-4v13l-4-4H1z" stroke="#fff" strokeWidth="1.200" /><path d="M11 8q1 2 0 4M14 6q2.500 4 0 8M17 3.500q4 6.500 0 13" stroke="#fff" strokeWidth="1.200" /></Svg>
          <Language>ESP</Language>
          <Clock>15:05<br />30/07/2020</Clock>
          <Svg w={20} h={20}><path d="M.5.500h19v16h-7L10 19l-2.500-2.500h-7z" stroke="#fff" strokeWidth="1.200" /></Svg>
        </Tray>
      </Taskbar>
    </Screen>
  );
}
